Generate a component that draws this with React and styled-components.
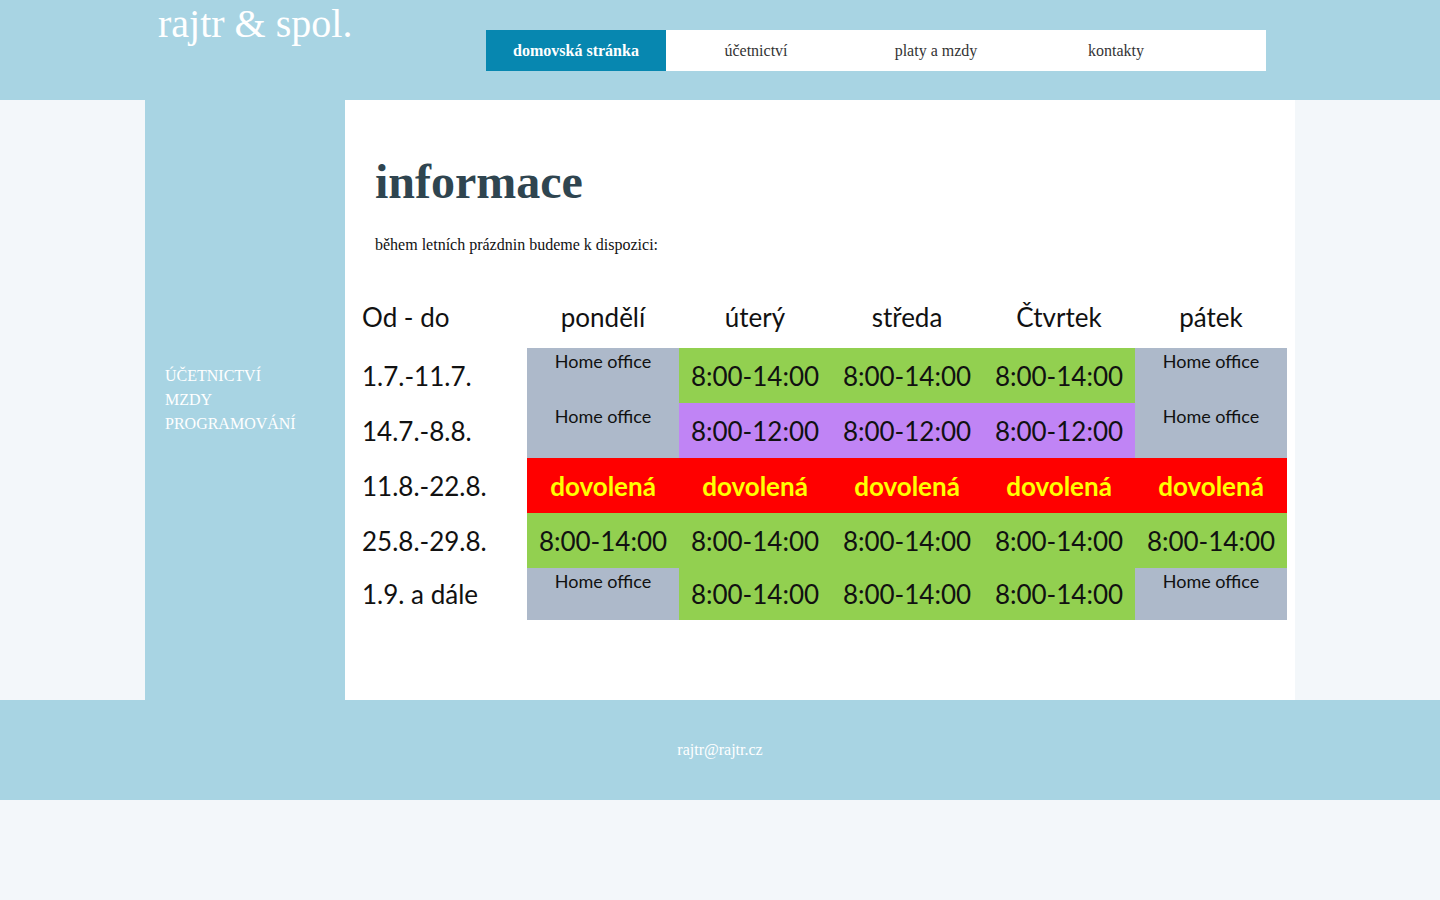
import React from "react";
import styled, { createGlobalStyle } from "styled-components";

const G = createGlobalStyle`
  body { margin:0; background:#f3f7fa; font-family:"Liberation Serif", serif; }
`;
const Header = styled.header`
  height:100px; background:#a8d4e3; display:flex; align-items:flex-start;
  padding-left:158px; box-sizing:border-box;
`;
const Logo = styled.div`
  color:#fff; font-size:40px; line-height:48px; width:328px; margin-top:0;
`;
const Nav = styled.nav`
  margin-top:30px; display:flex; background:#fff; width:780px; height:41px;
`;
const Tab = styled.a`
  width:180px; display:flex; align-items:center; justify-content:center;
  font-size:16px; color:${p=>p.$active?"#fff":"#333"}; background:${p=>p.$active?"#0787b0":"transparent"};
  font-weight:${p=>p.$active?"bold":"normal"};
`;
const Middle = styled.div`display:flex; height:600px; padding-left:145px;`;
const Side = styled.aside`
  width:200px; background:#a8d4e3; display:flex; flex-direction:column; justify-content:center;
  padding-left:20px; box-sizing:border-box; padding-top:0;
`;
const SideLink = styled.div`color:#fff; font-size:16px; line-height:24px;`;
const Main = styled.main`width:950px; background:#fff; padding:50px 8px 0 10px; box-sizing:border-box;`;
const H1 = styled.h1`margin:0 0 0 20px; font-size:48px; color:#2f4550; line-height:64px; font-weight:bold;`;
const P = styled.p`margin:22px 0 0 20px; font-size:16px; color:#111;`;
const Table = styled.div`
  margin-top:32px; display:grid; grid-template-columns:172px repeat(5,152px);
  grid-template-rows:62px repeat(4,55px) 52px; font-family:Lato, "Open Sans", sans-serif; color:#111;
`;
const Cell = styled.div`
  background:${p=>p.$bg||"transparent"}; display:flex; justify-content:${p=>p.$left?"flex-start":"center"};
  align-items:${p=>p.$top?"flex-start":"center"}; padding-top:${p=>p.$top?"2px":"0"};
  padding-left:${p=>p.$left?"7px":"0"};
  font-size:${p=>p.$small?"18px":"26px"}; font-weight:${p=>p.$bold?"bold":"normal"};
  color:${p=>p.$color||"#111"}; box-sizing:border-box;
`;
const Footer = styled.footer`
  height:100px; background:#a8d4e3; display:flex; justify-content:center; align-items:center;
  color:#fff; font-size:16px; padding-right:0;
`;

const C={g:"#92d050",b:"#adb9ca",p:"#c084f5",r:"#ff0000"};
const rows=[
 ["1.7.-11.7.",["H","g","g","g","H"]],
 ["14.7.-8.8.",["H","p","p","p","H"]],
 ["11.8.-22.8.",["D","D","D","D","D"]],
 ["25.8.-29.8.",["g","g","g","g","g"]],
 ["1.9. a dále",["H","g","g","g","H"]],
];
function cell(k,i){
  if(k==="H") return <Cell key={i} $bg={C.b} $top $small>Home office</Cell>;
  if(k==="D") return <Cell key={i} $bg={C.r} $bold $color="#ffff00">dovolená</Cell>;
  if(k==="p") return <Cell key={i} $bg={C.p}>8:00-12:00</Cell>;
  return <Cell key={i} $bg={C.g}>8:00-14:00</Cell>;
}
export default function App(){
  return <>
    <G/>
    <Header>
      <Logo>rajtr &amp; spol.</Logo>
      <Nav>
        <Tab $active>domovská stránka</Tab><Tab>účetnictví</Tab><Tab>platy a mzdy</Tab><Tab>kontakty</Tab>
      </Nav>
    </Header>
    <Middle>
      <Side><SideLink>ÚČETNICTVÍ</SideLink><SideLink>MZDY</SideLink><SideLink>PROGRAMOVÁNÍ</SideLink></Side>
      <Main>
        <H1>informace</H1>
        <P>během letních prázdnin budeme k dispozici:</P>
        <Table>
          <Cell $left>Od - do</Cell>
          {["pondělí","úterý","středa","Čtvrtek","pátek"].map(d=><Cell key={d}>{d}</Cell>)}
          {rows.map(([l,cs])=><React.Fragment key={l}><Cell $left>{l}</Cell>{cs.map(cell)}</React.Fragment>)}
        </Table>
      </Main>
    </Middle>
    <Footer>rajtr@rajtr.cz</Footer>
  </>;
}
